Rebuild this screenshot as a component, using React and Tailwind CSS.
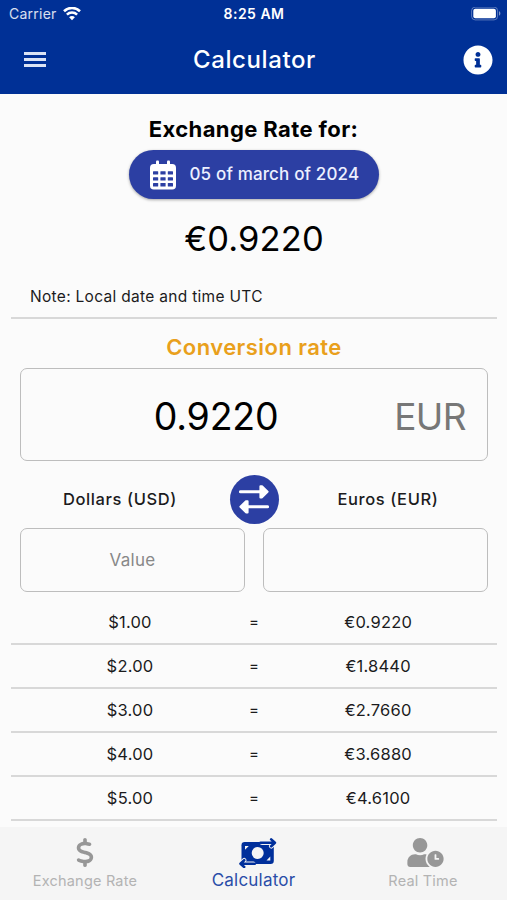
import { useState } from 'react'
import { FaInfoCircle, FaUserClock } from 'react-icons/fa'
import { FaDollarSign } from 'react-icons/fa6'

const RATE = 0.922

const AMOUNTS = [1, 2, 3, 4, 5]

const TABS = [
  { key: 'rate',       label: 'Exchange Rate', icon: FaDollarSign, iconClass: 'h-[29px] w-[20px]' },
  { key: 'calculator', label: 'Calculator',    icon: MoneyIcon,    iconClass: 'ml-[8px] h-[30px] w-[38px]' },
  { key: 'realtime',   label: 'Real Time',     icon: FaUserClock,  iconClass: 'ml-[6px] h-[29px] w-[37px]' },
]

function WifiIcon() {
  return (
    <svg width="18" height="14" viewBox="0 0 18 14" fill="none" stroke="#fff" strokeWidth="2.6">
      <path d="M1 4.2a11.5 11.5 0 0 1 16 0" />
      <path d="M3.9 7.6a7.4 7.4 0 0 1 10.2 0" />
      <path d="M9 13.2 6.1 10.2a4 4 0 0 1 5.8 0z" fill="#fff" stroke="none" />
    </svg>
  )
}

function BatteryIcon() {
  return (
    <svg width="30" height="14" viewBox="0 0 30 14" fill="none">
      <rect x="0.6" y="0.1" width="26" height="12.8" rx="3.6" stroke="#fff" strokeOpacity="0.35" />
      <rect x="2.3" y="1.8" width="22.6" height="9.4" rx="2" fill="#fff" />
      <path d="M28 4.3c1.8.6 1.8 3.8 0 4.4z" fill="#fff" fillOpacity="0.5" />
    </svg>
  )
}

function CalendarIcon() {
  return (
    <svg width="26" height="30" viewBox="0 0 26 30">
      <rect x="0" y="4" width="26" height="25.5" rx="3.8" fill="#fff" />
      <rect x="6" y="0.5" width="3" height="6" rx="1" fill="#fff" />
      <rect x="17" y="0.5" width="3" height="6" rx="1" fill="#fff" />
      <g fill="#2c3fa3">
        {[11.2, 17.2, 23].map((y) =>
          [3, 10.4, 17.8].map((x) => (
            <rect key={`${x}-${y}`} x={x} y={y} width="5.2" height="3.4" rx="0.5" />
          ))
        )}
      </g>
    </svg>
  )
}

function SwapIcon() {
  return (
    <svg width="30" height="30" viewBox="0 0 30 30" fill="#fff" stroke="#fff" strokeLinejoin="round">
      <path d="M1.4 6.8H22" strokeWidth="3" strokeLinecap="round" />
      <path d="M21.4 1.2v11.2l1.6 0 5.6-5.6-5.6-5.6z" strokeWidth="2" />
      <path d="M28.6 21.8H8" strokeWidth="3" strokeLinecap="round" />
      <path d="M8.6 16.2v11.2l-1.6 0-5.6-5.6 5.6-5.6z" strokeWidth="2" />
    </svg>
  )
}

// Bill with one arrow leaving the top right corner and one the bottom left
function MoneyIcon({ className }) {
  return (
    <svg className={className} viewBox="0 0 38 30" fill="none" strokeLinecap="round" strokeLinejoin="round">
      <rect x="2.5" y="4" width="32.3" height="22" rx="3.2" fill="currentColor" />
      <circle cx="18.7" cy="15" r="6" fill="#f5f5f5" />
      <path d="M6 8h3.8L6 11.8zM31.3 22.4h-3.8l3.8-3.8z" fill="#f5f5f5" />
      <g stroke="#f5f5f5" strokeWidth="4.4">
        <path d="M23 4.7h12M32.2 1.4l3.7 3.3-3.7 3.6" />
        <path d="M14.3 25.7h-12M5.2 22.2l-3.7 3.5 3.7 3.2" />
      </g>
      <g stroke="currentColor" strokeWidth="2.6">
        <path d="M21.5 4.7h14M32.2 1.4l3.7 3.3-3.7 3.6" />
        <path d="M15.8 25.7h-14M5.2 22.2l-3.7 3.5 3.7 3.2" />
      </g>
    </svg>
  )
}

export default function App() {
  const [activeTab, setActiveTab] = useState('calculator')
  const [value, setValue] = useState('')

  const result = value && !isNaN(value) ? (Number(value) * RATE).toFixed(4) : ''

  return (
    <div className="flex h-[900px] w-full flex-col overflow-hidden bg-[#fbfbfb] font-['Inter',sans-serif] text-[#1b1b1d]">

      {/* Status bar and title */}
      <header className="h-[94px] shrink-0 bg-[#003096] text-white">
        <div className="grid h-[27px] grid-cols-3 items-center pr-[6px] pl-[9px] text-[14px]">
          <div className="flex items-center gap-[6px] tracking-[0.25px] text-white/85">
            Carrier <WifiIcon />
          </div>
          <div className="pr-[2px] text-center text-[14px] font-semibold tracking-[0.5px]">8:25 AM</div>
          <div className="flex justify-end"><BatteryIcon /></div>
        </div>
        <div className="flex h-[65px] items-center justify-between pr-[14px] pl-6">
          <button className="flex w-[24px] flex-col gap-[3px]">
            <span className="h-[3px] w-[22px] bg-[#dbe3f5]" />
            <span className="h-[3px] w-[22px] bg-[#dbe3f5]" />
            <span className="h-[3px] w-[22px] bg-[#dbe3f5]" />
          </button>
          <h1 className="pt-px pr-[2px] text-[24px] font-medium tracking-[0.6px]">Calculator</h1>
          <button><FaInfoCircle className="size-[30px]" /></button>
        </div>
      </header>

      {/* Rate of the day */}
      <section className="flex h-[223px] shrink-0 flex-col items-center pt-[19px]">
        <h2 className="text-[22px] leading-8 font-bold tracking-[0.4px] text-black">Exchange Rate for:</h2>
        <button className="mt-[5px] flex h-[49px] w-[250px] items-center gap-[14px] rounded-full bg-[#2c3fa3] pl-[21px] text-[17px] font-medium tracking-[0.15px] whitespace-nowrap text-[#edf0ff] shadow-[0_1px_3px_rgba(0,0,0,0.35)]">
          <CalendarIcon />
          05 of march of 2024
        </button>
        <p className="mt-[16px] pl-px text-[34.5px] leading-[48px] tracking-[0.1px] text-black">€0.9220</p>
        <p className="mt-[22px] self-start pl-[30px] text-[15.5px] leading-6 tracking-[0.3px]">Note: Local date and time UTC</p>
      </section>
      <hr className="mr-[10px] ml-[11px] h-[2px] shrink-0 border-0 bg-[#d8d8d8]" />

      {/* Converter */}
      <section className="shrink-0 pt-[10px] pr-[19px] pl-5">
        <h2 className="text-center text-[22px] leading-9 font-semibold tracking-[0.45px] text-[#e9a01c]">Conversion rate</h2>
        <div className="mt-[3px] flex h-[93px] items-center rounded-[7px] border border-[#bdbdbd] pt-1">
          <span className="flex-1 pt-[2px] pl-[17px] text-center text-[37.5px] tracking-[-0.2px] text-black">0.9220</span>
          <span className="pr-[21px] text-[37px] tracking-[-0.6px] text-[#777]">EUR</span>
        </div>
        <div className="mt-[14px] grid h-[49px] grid-cols-[200px_1fr_200px] items-center text-center text-[16.5px] font-medium tracking-[0.6px]">
          <span>Dollars (USD)</span>
          <button className="mx-auto flex size-[49px] items-center justify-center rounded-full bg-[#2c3fa3]">
            <SwapIcon />
          </button>
          <span>Euros (EUR)</span>
        </div>
        <div className="mt-[4px] grid grid-cols-2 gap-[18px]">
          <input
            value={value}
            onChange={(e) => setValue(e.target.value)}
            placeholder="Value"
            className="h-[64px] w-full min-w-0 rounded-[7px] border border-[#bdbdbd] text-center text-[17px] tracking-[0.3px] placeholder:text-[#888]"
          />
          <input
            value={result}
            readOnly
            className="h-[64px] w-full min-w-0 rounded-[7px] border border-[#bdbdbd] text-center text-[17px] tracking-[0.3px]"
          />
        </div>
      </section>

      {/* Conversion table */}
      <section className="min-h-0 flex-1 pt-[9px] pr-[10px] pl-[11px]">
        {AMOUNTS.map((amount) => (
          <div
            key={amount}
            className="grid h-[44px] grid-cols-[238px_1fr_238px] items-center border-b-2 border-[#d8d8d8] pt-px text-center text-[16.5px] tracking-[0.2px]"
          >
            <span>${amount.toFixed(2)}</span>
            <span className="text-[15px]">=</span>
            <span>€{(amount * RATE).toFixed(4)}</span>
          </div>
        ))}
      </section>

      {/* Bottom tabs */}
      <nav className="grid h-[73px] shrink-0 grid-cols-3 bg-[#f5f5f5]">
        {TABS.map((tab) => {
          const active = activeTab === tab.key
          return (
            <button
              key={tab.key}
              onClick={() => setActiveTab(tab.key)}
              className={`flex flex-col items-center pt-[11px] ${active ? 'text-[#002f9b]' : 'text-[#979797]'}`}
            >
              <tab.icon className={tab.iconClass} />
              <span className={active ? 'text-[17px] leading-[24px] tracking-[0.2px] text-[#2a4da8]' : 'mt-[3px] pl-px text-[14.5px] leading-[22px] tracking-[0.2px] text-[#b3b3b3]'}>
                {tab.label}
              </span>
            </button>
          )
        })}
      </nav>
    </div>
  )
}
